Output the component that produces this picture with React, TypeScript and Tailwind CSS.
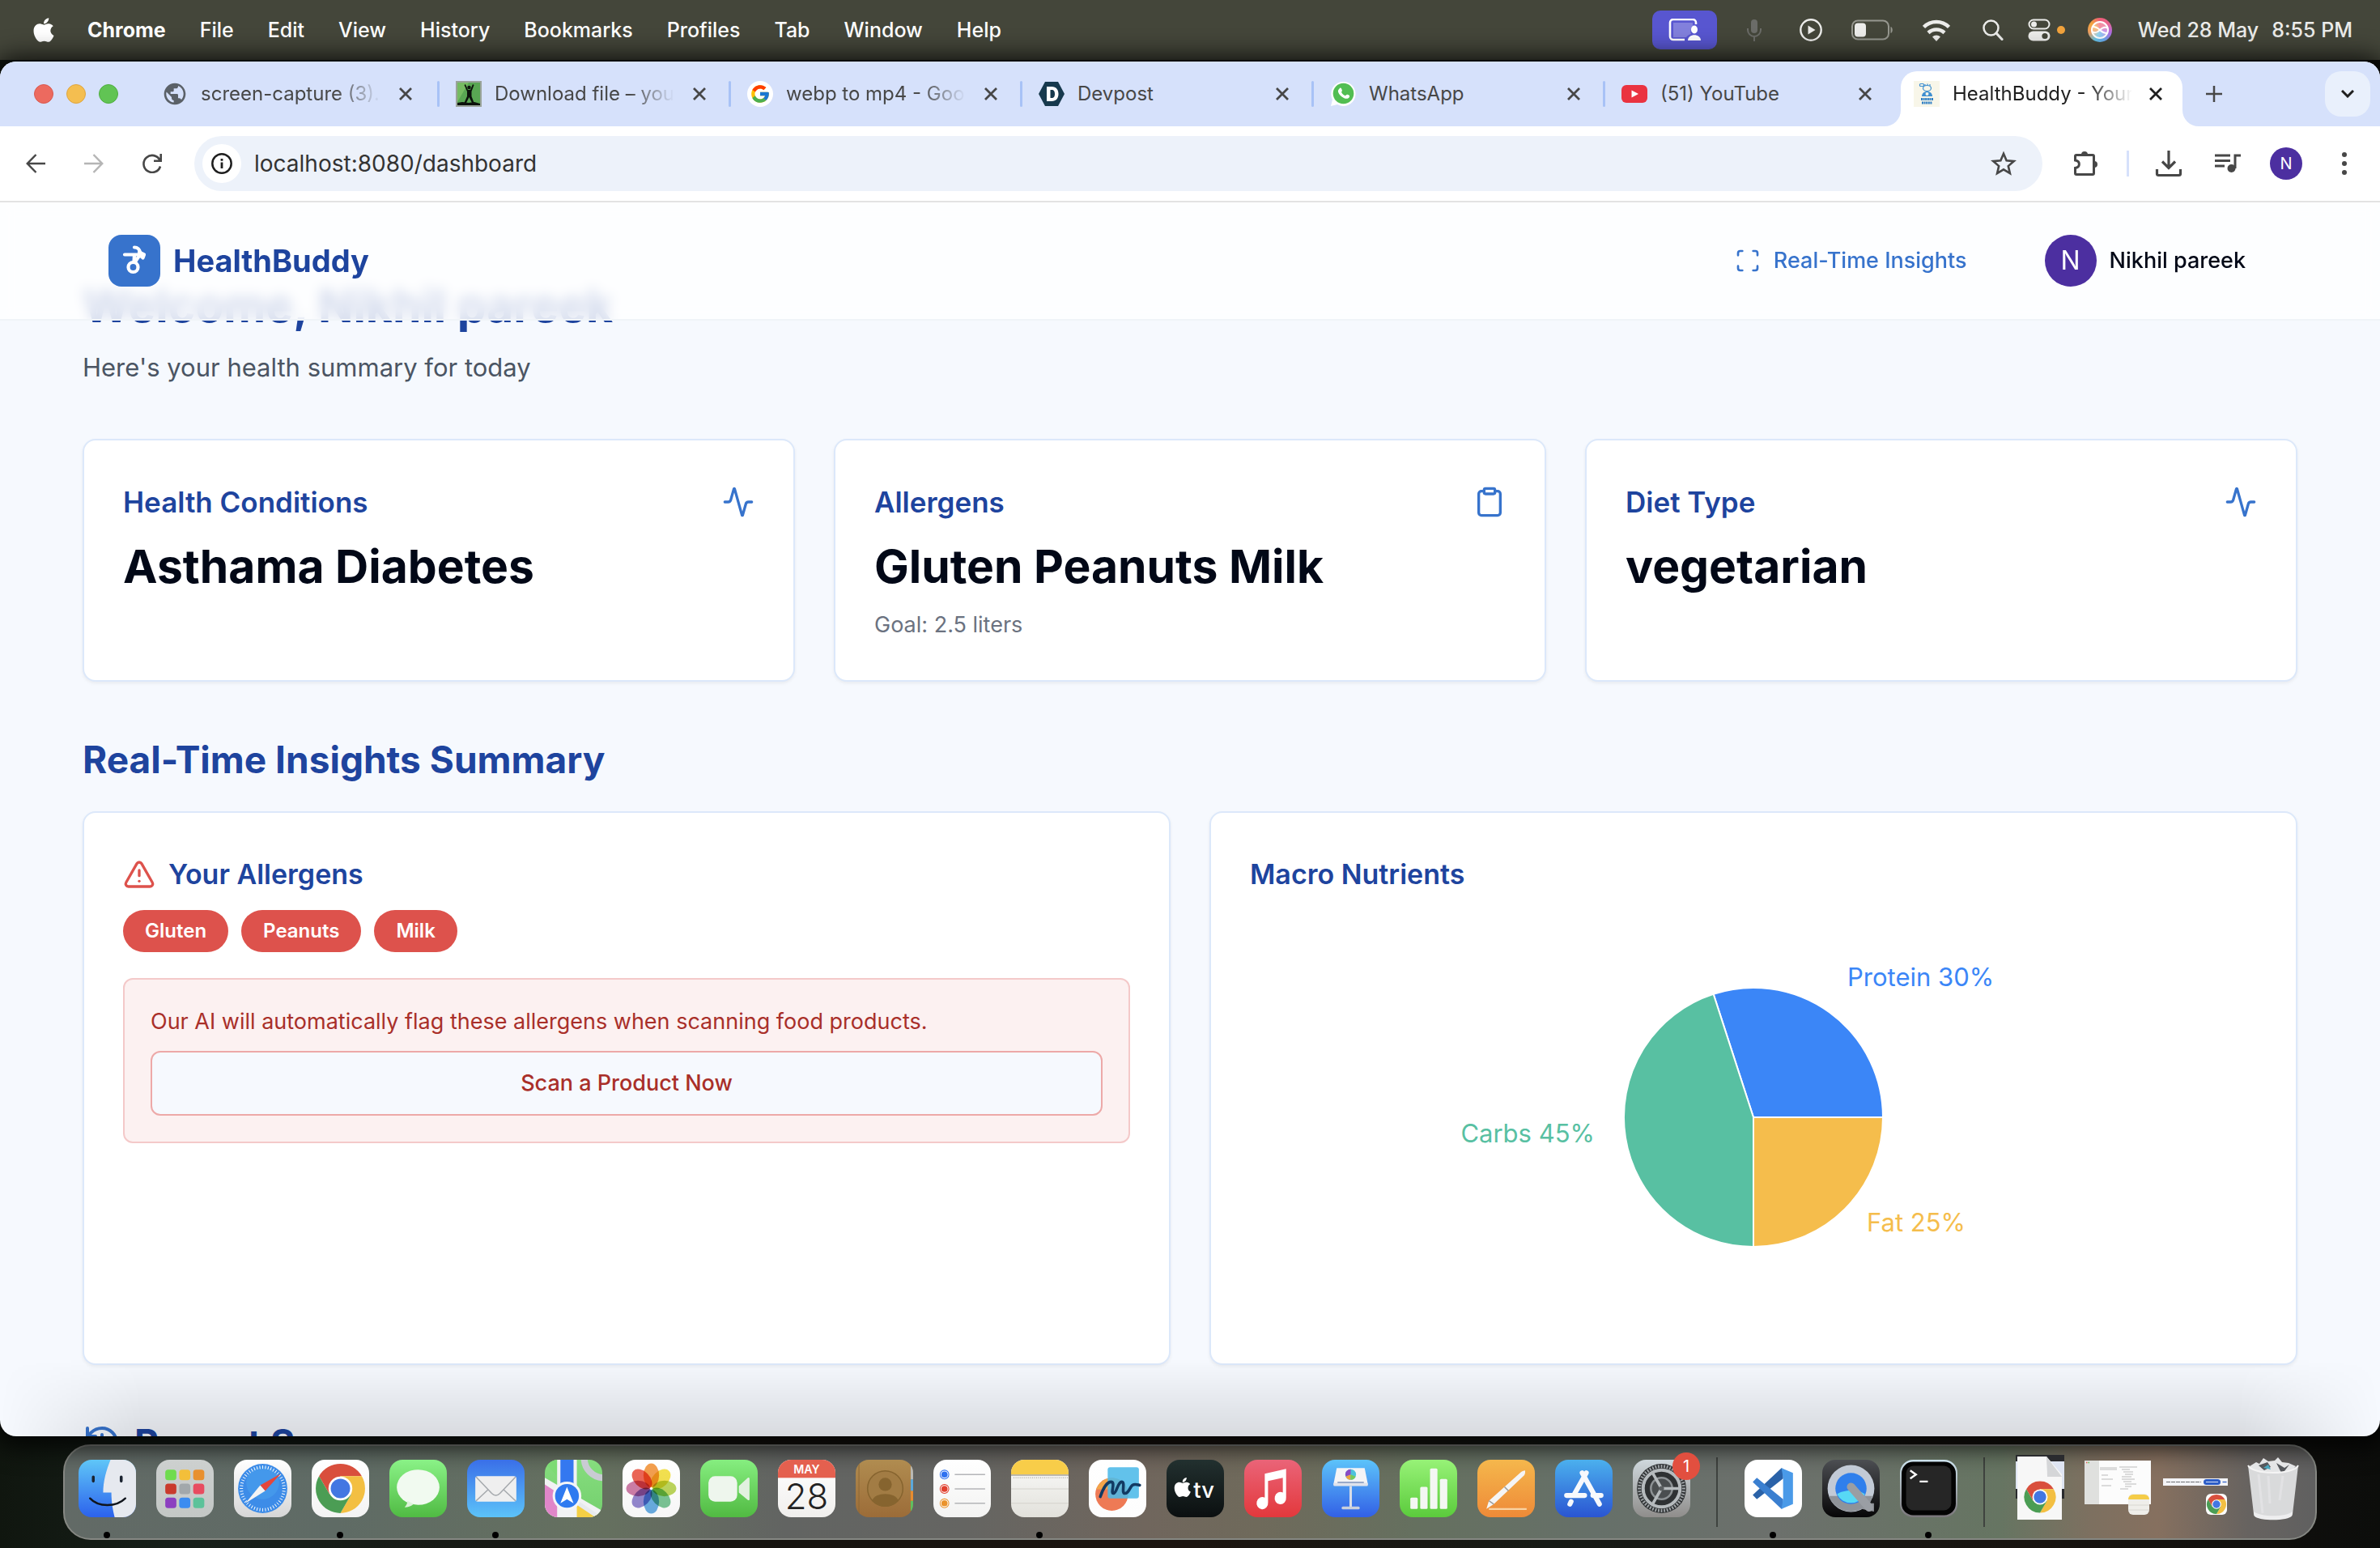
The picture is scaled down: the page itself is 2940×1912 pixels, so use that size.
import React from "react";
import { Activity, Clipboard, History, Scan, TriangleAlert } from "lucide-react";
import { FaApple } from "react-icons/fa";
import { FcGoogle } from "react-icons/fc";
import { MdPublic } from "react-icons/md";

/* ---------- Menu bar ---------- */

const menus = ["File", "Edit", "View", "History", "Bookmarks", "Profiles", "Tab", "Window", "Help"];

function MenuBar() {
  return (
    <header className="flex h-[74px] shrink-0 items-center bg-[#44463a] pr-[34px] pl-[38px] text-[25px] leading-8 font-medium text-white">
      <button aria-label="Apple menu" className="mr-[38px]">
        <FaApple className="h-[34px] w-8" />
      </button>
      <nav className="flex items-center gap-[42px]">
        <button className="font-bold">Chrome</button>
        {menus.map((m) => (
          <button key={m}>{m}</button>
        ))}
      </nav>
      <div className="ml-auto flex items-center text-[#ececea]">
        <button aria-label="Screen sharing" className="flex h-12 w-20 items-center justify-center rounded-[10px] bg-[#5856d0]">
          <svg viewBox="0 0 40 28" className="h-7 w-10" fill="none">
            <path d="M34 7V5a4 4 0 0 0-4-4H6a4 4 0 0 0-4 4v17a4 4 0 0 0 4 4h14" stroke="#fff" strokeWidth="2.6" />
            <path d="M6 5h24v6a6 6 0 0 0-2 8c-3 1-5 2-6 4H6z" fill="#fff" opacity=".25" />
            <ellipse cx="32" cy="13.500" rx="4" ry="5" fill="#fff" />
            <path d="M24 27c0-9 16-9 16 0z" fill="#fff" />
          </svg>
        </button>
        <svg viewBox="0 0 24 28" className="ml-[34px] h-7 w-6 text-[#6b6c68]" fill="none" stroke="currentColor" strokeWidth="2">
          <rect x="8" y="1" width="8" height="17" rx="4" fill="currentColor" stroke="none" />
          <path d="M4 12v2a8 8 0 0 0 16 0v-2M12 22v6" />
        </svg>
        <svg viewBox="0 0 28 28" className="ml-11 h-7 w-7" fill="none">
          <circle cx="14" cy="14" r="12.700" stroke="currentColor" strokeWidth="2.400" />
          <path d="M10.500 8.500v11l9-5.500z" fill="currentColor" />
        </svg>
        <svg viewBox="0 0 52 26" className="ml-9 h-[26px] w-[52px]" fill="none">
          <rect x="1" y="1.500" width="45" height="23" rx="7" stroke="#96978f" strokeWidth="2" />
          <rect x="4" y="4.500" width="14" height="17" rx="4" fill="currentColor" />
          <path d="M48.500 9c3 1 3 7 0 8z" fill="#96978f" />
        </svg>
        <svg viewBox="0 0 34 28" className="ml-9 h-7 w-[34px]" fill="none" stroke="currentColor" strokeWidth="4.500">
          <path d="M1.500 10.500a22 22 0 0 1 31 0M7 17.500a14.500 14.500 0 0 1 20 0" />
          <path d="M17 28l-5-5.500a7 7 0 0 1 10 0z" fill="currentColor" stroke="none" />
        </svg>
        <svg viewBox="0 0 26 26" className="ml-10 h-[26px] w-[26px]" fill="none" stroke="currentColor" strokeWidth="2.500">
          <circle cx="10.500" cy="10.500" r="9" />
          <path d="M17 17l7 7.500" strokeWidth="3.200" strokeLinecap="round" />
        </svg>
        <svg viewBox="0 0 28 28" className="ml-[30px] h-7 w-7" fill="none">
          <rect x="1.500" y="1.500" width="25" height="11" rx="5.500" stroke="currentColor" strokeWidth="2" />
          <circle cx="7.500" cy="7" r="3.500" fill="currentColor" />
          <rect x="0.500" y="15.500" width="27" height="12" rx="6" fill="currentColor" />
          <circle cx="21" cy="21.500" r="3.600" fill="#44463a" />
        </svg>
        <span className="ml-2 h-[10px] w-[10px] rounded-full bg-[#f2a33c]" />
        <span className="ml-7 flex h-[30px] w-[30px] items-center justify-center rounded-full bg-[conic-gradient(#ee5d78,#e9678f,#b36be0,#6aa8f0,#66c6e8,#f0a060,#f2a33c,#ee5d78)]">
          <svg viewBox="0 0 30 30" className="h-[30px] w-[30px]" fill="none" stroke="#fff" strokeWidth="2">
            <circle cx="15" cy="15" r="10" fill="#fff" fillOpacity=".3" />
            <path d="M5 17c5 3 8 0 10-2s6-5 10-2M6 11c5 0 7 2 9 4s5 4 9 4" />
          </svg>
        </span>
        <button className="ml-8 flex gap-4">
          <span>Wed 28 May</span>
          <span>8:55 PM</span>
        </button>
      </div>
    </header>
  );
}

/* ---------- Browser chrome ---------- */

function DownloadFavicon() {
  return (
    <svg viewBox="0 0 32 32" className="h-8 w-8">
      <rect width="32" height="32" fill="#9aa39a" />
      <rect x="2" y="2" width="28" height="28" fill="#59a653" />
      <path d="M2 2h14L2 26z" fill="#76bb62" />
      <path d="M12 4l3 7h3l3-7 1.500 1-3 8v6l3.500 9h-2.500l-4-8-4 8H10l4-9v-6l-3.500-8z" fill="#0c120c" />
      <path d="M2 27l6-1 8 1 7-1 7 2v2H2z" fill="#0c120c" />
      <circle cx="16.500" cy="8" r="2.200" fill="#0c120c" />
    </svg>
  );
}

function GoogleFavicon() {
  return (
    <span className="flex h-8 w-8 items-center justify-center rounded-full bg-white">
      <FcGoogle className="h-[26px] w-[26px]" />
    </span>
  );
}

function DevpostFavicon() {
  return (
    <svg viewBox="0 0 32 32" className="h-8 w-8">
      <path d="M8 1h16l8 15-8 15H8L0 16z" fill="#17394d" />
      <path fillRule="evenodd" d="M10 7h6c6 0 8.500 4 8.500 9s-2.500 9-8.500 9h-6zm4.500 4v10H16c3 0 4-2 4-5s-1-5-4-5z" fill="#fff" />
    </svg>
  );
}

function WhatsappFavicon() {
  return (
    <svg viewBox="0 0 32 32" className="h-8 w-8">
      <path d="M16 1a15 15 0 1 1-7 28l-8 2 2-8A15 15 0 0 1 16 1z" fill="#fff" />
      <circle cx="16.500" cy="15.500" r="12.800" fill="#52be52" />
      <path d="M12 9c1-1 2 0 2.500 1.500.8 2 .3 2-.5 3.200 1 2 2.500 3.500 5 4.600 1-.8 1.500-2 2.500-1.500 2 .8 3 1.200 2.500 2.700-.8 2.500-4 3-7 1.500-3.500-1.500-6-4.500-7-7.500-.4-2 .7-3.400 2-4.500z" fill="#fff" />
    </svg>
  );
}

function YoutubeFavicon() {
  return (
    <svg viewBox="0 0 32 32" className="h-8 w-8">
      <rect y="5" width="32" height="22" rx="6" fill="#ea3340" />
      <path d="M12.500 11.500v9L21 16z" fill="#fff" />
    </svg>
  );
}

function HealthFavicon() {
  return (
    <svg viewBox="0 0 32 32" className="h-8 w-8">
      <rect width="32" height="32" fill="#f8f6e9" />
      <g fill="none" stroke="#3f8fd0" strokeWidth="1.200">
        <rect x="7.500" y="3.500" width="5" height="3" rx="1" />
        <path d="M14 6V4M17 6V3.500M20 6V4" />
        <ellipse cx="16.500" cy="9" rx="5" ry="3.500" />
      </g>
      <path d="M10 19c0-8 13-8 13 0z" fill="#3f8fd0" />
      <circle cx="16.500" cy="16" r="2" fill="#f8f6e9" />
      <path d="M9 22.500h15M10 27h13" stroke="#2f7fc4" strokeWidth="3" strokeDasharray="2 .6" />
    </svg>
  );
}

function CloseIcon() {
  return (
    <svg viewBox="0 0 18 18" className="h-[18px] w-[18px]" fill="none" stroke="currentColor" strokeWidth="2.800">
      <path d="M2 2l14 14M16 2L2 16" />
    </svg>
  );
}

const tabs = [
  { title: "screen-capture (3).", icon: <MdPublic className="h-8 w-8 text-[#5b6168]" />, fade: true, sep: false },
  { title: "Download file – you", icon: <DownloadFavicon />, fade: true, sep: true },
  { title: "webp to mp4 - Goo", icon: <GoogleFavicon />, fade: true, sep: true },
  { title: "Devpost", icon: <DevpostFavicon />, fade: false, sep: true },
  { title: "WhatsApp", icon: <WhatsappFavicon />, fade: false, sep: true },
  { title: "(51) YouTube", icon: <YoutubeFavicon />, fade: false, sep: true },
];

const fadeMask = "[mask-image:linear-gradient(to_right,black_75%,transparent)]";

function TabStrip() {
  return (
    <div className="flex h-20 shrink-0 items-center bg-[#d6e1fb] text-2xl text-[#474747]">
      <div className="flex gap-4 pr-[34px] pl-[42px]">
        <button aria-label="Close window" className="h-6 w-6 rounded-full border border-[#d9584f] bg-[#ec6a5f]" />
        <button aria-label="Minimise window" className="h-6 w-6 rounded-full border border-[#dfa53f] bg-[#f4be50]" />
        <button aria-label="Zoom window" className="h-6 w-6 rounded-full border border-[#4fae3f] bg-[#61c454]" />
      </div>
      {tabs.map((t) => (
        <div key={t.title} className="flex w-[360px] shrink-0 items-center">
          {t.sep && <span className="h-8 w-[3px] rounded bg-[#a8c2f6]" />}
          <button className="ml-5 flex items-center gap-4">
            {t.icon}
            <span className={"w-[222px] overflow-hidden text-left whitespace-nowrap " + (t.fade ? fadeMask : "")}>{t.title}</span>
          </button>
          <button aria-label={"Close " + t.title} className="ml-[22px]">
            <CloseIcon />
          </button>
        </div>
      ))}
      <div className="-ml-3 flex h-20 shrink-0 items-end">
        <svg viewBox="0 0 20 20" className="h-5 w-5" fill="#fff">
          <path d="M20 0v20H0A20 20 0 0 0 20 0z" />
        </svg>
        <div className="flex h-[68px] items-center self-end rounded-t-[20px] bg-white pr-6 pb-3 pl-4 text-[#1f1f1f]">
          <button className="flex items-center gap-4">
            <HealthFavicon />
            <span className={"w-[222px] overflow-hidden text-left whitespace-nowrap " + fadeMask}>HealthBuddy - Your</span>
          </button>
          <button aria-label="Close HealthBuddy" className="ml-5">
            <CloseIcon />
          </button>
        </div>
        <svg viewBox="0 0 20 20" className="h-5 w-5" fill="#fff">
          <path d="M0 0v20h20A20 20 0 0 1 0 0z" />
        </svg>
      </div>
      <button aria-label="New tab" className="ml-2">
        <svg viewBox="0 0 22 22" className="h-[22px] w-[22px]" stroke="#474747" strokeWidth="2.500">
          <path d="M11 1v20M1 11h20" />
        </svg>
      </button>
      <button aria-label="Search tabs" className="mr-3 ml-auto flex h-14 w-14 items-center justify-center rounded-[20px] bg-[#e9f0fc]">
        <svg viewBox="0 0 16 10" className="h-[10px] w-4" fill="none" stroke="#1f1f1f" strokeWidth="3">
          <path d="M1 1l7 7 7-7" />
        </svg>
      </button>
    </div>
  );
}

function Toolbar() {
  return (
    <div className="flex h-[94px] shrink-0 items-center border-b-2 border-[#e3e3e3] bg-white pr-[38px] pl-8 text-[#474747]">
      <button aria-label="Back">
        <svg viewBox="0 0 24 24" className="h-6 w-6" fill="none" stroke="currentColor" strokeWidth="2.500">
          <path d="M24 12H2M12.500 1L1.800 12l10.700 11" />
        </svg>
      </button>
      <button aria-label="Forward" className="ml-12 text-[#b5b5b5]">
        <svg viewBox="0 0 24 24" className="h-6 w-6" fill="none" stroke="currentColor" strokeWidth="2.500">
          <path d="M0 12h22M11.500 1l10.700 11-10.700 11" />
        </svg>
      </button>
      <button aria-label="Reload" className="ml-12">
        <svg viewBox="0 0 24 24" className="h-6 w-6" fill="none" stroke="currentColor" strokeWidth="2.600">
          <path d="M22 15.500A10.500 10.500 0 1 1 21.500 8M22.700 0v8.700H14" />
        </svg>
      </button>
      <div className="ml-10 flex h-[68px] grow items-center rounded-full bg-[#edf2fa] pr-8 pl-[10px]">
        <button aria-label="Site information" className="flex h-12 w-12 items-center justify-center rounded-full bg-white">
          <svg viewBox="0 0 26 26" className="h-[26px] w-[26px]" fill="none" stroke="#1f1f1f">
            <circle cx="13" cy="13" r="11.700" strokeWidth="2.500" />
            <path d="M13 11.500v7.500M13 7v2.800" strokeWidth="2.800" />
          </svg>
        </button>
        <input
          aria-label="Address"
          defaultValue="localhost:8080/dashboard"
          className="ml-4 min-w-0 grow bg-transparent text-[28px] leading-9 text-[#333333] outline-none"
        />
        <button aria-label="Bookmark this tab">
          <svg viewBox="0 0 32 32" className="h-8 w-8" fill="none" stroke="currentColor" strokeWidth="2.600">
            <path d="M16 3.800l3.600 8.500 9.200.8-7 6 2.100 9L16 23.300l-7.900 4.800 2.100-9-7-6 9.200-.8z" />
          </svg>
        </button>
      </div>
      <button aria-label="Extensions" className="ml-9">
        <svg viewBox="0 0 34 34" className="h-[34px] w-[34px]" fill="none" stroke="currentColor" strokeWidth="3">
          <path d="M6 6.500h20a1.500 1.500 0 0 1 1.500 1.500v21a1.500 1.500 0 0 1-1.500 1.500H6A1.500 1.500 0 0 1 4.500 29v-6.500c6.500-1 6.500-8.500 0-9.500V8A1.500 1.500 0 0 1 6 6.500z" />
          <path d="M12 6a4 4 0 0 1 8 0zM28 14a4 4 0 0 1 0 8z" fill="currentColor" stroke="none" />
        </svg>
      </button>
      <span className="ml-[34px] h-8 w-[3px] bg-[#d6e1fb]" />
      <button aria-label="Downloads" className="ml-8">
        <svg viewBox="0 0 34 34" className="h-[34px] w-[34px]" fill="none" stroke="currentColor" strokeWidth="3.200">
          <path d="M17 1v21M9 14.500l8 8 8-8M2.500 24v5.500a2 2 0 0 0 2 2h25a2 2 0 0 0 2-2V24" />
        </svg>
      </button>
      <button aria-label="Media controls" className="ml-10">
        <svg viewBox="0 0 32 26" className="h-[26px] w-8" fill="none" stroke="currentColor" strokeWidth="3">
          <path d="M0 3h19M0 9.500h19M0 16h12M25 19V3h7" />
          <circle cx="20.500" cy="19" r="5" fill="currentColor" stroke="none" />
        </svg>
      </button>
      <button aria-label="Profile" className="ml-9 flex h-10 w-10 items-center justify-center rounded-full bg-[#4c2fa0] text-xl text-white">
        N
      </button>
      <button aria-label="Chrome menu" className="ml-[46px]">
        <svg viewBox="0 0 12 30" className="h-[30px] w-3" fill="currentColor">
          <circle cx="6" cy="4" r="3" />
          <circle cx="6" cy="15" r="3" />
          <circle cx="6" cy="26" r="3" />
        </svg>
      </button>
    </div>
  );
}

/* ---------- Dashboard page ---------- */

function SiteHeader() {
  return (
    <header className="relative z-10 border-b-2 border-[#f0f4f8] bg-white/80 backdrop-blur-sm">
      <div className="mx-auto flex h-36 max-w-[2800px] items-center px-16">
        <a href="#home" className="flex items-center gap-4">
          <span className="flex h-16 w-16 items-center justify-center rounded-2xl bg-[#3773cc]">
            <svg viewBox="0 0 64 64" className="h-16 w-16" fill="none" stroke="#fff" strokeWidth="4.200" strokeLinecap="round" strokeLinejoin="round">
              <circle cx="30.500" cy="40" r="6" />
              <path d="M20 24.500h17M32 15.500c4 0 6.500 2.500 7.500 7" />
              <path d="M38 21.500l6 3-1.500 4-4-3.500zM38 26c-1.500 2.500-3 3.500-4.500 7M32 25l-.5 8" />
            </svg>
          </span>
          <span className="text-[38px] leading-[56px] font-bold text-[#1e449e]">HealthBuddy</span>
        </a>
        <nav className="ml-auto flex items-center gap-8 text-[27px] leading-10 font-medium">
          <a href="#insights" className="flex items-center gap-4 px-8 text-[#3773cc]">
            <Scan className="h-8 w-8" />
            Real-Time Insights
          </a>
          <button className="flex items-center gap-4 px-8 text-[#020817]">
            <span className="flex h-16 w-16 items-center justify-center rounded-full bg-[#4c2fa0] text-[32px] font-normal text-white">N</span>
            Nikhil pareek
          </button>
        </nav>
      </div>
    </header>
  );
}

const cardClass = "rounded-2xl border-2 border-[#dce8fa] bg-white p-12 shadow-[0_2px_4px_rgba(0,0,0,0.06)]";

const summary = [
  { title: "Health Conditions", value: "Asthama Diabetes", note: "", Icon: Activity },
  { title: "Allergens", value: "Gluten Peanuts Milk", note: "Goal: 2.5 liters", Icon: Clipboard },
  { title: "Diet Type", value: "vegetarian", note: "", Icon: Activity },
];

function PieChart() {
  return (
    <svg viewBox="0 0 1244 512" className="h-[512px] w-full font-['Inter',sans-serif] text-[31px]" role="img" aria-label="Macro nutrients">
      <g transform="translate(622 256)" stroke="#fff" strokeWidth="2">
        <path d="M0 0H160A160 160 0 0 0 -49.400 -152.200Z" fill="#3b86f7" />
        <path d="M0 0L-49.400 -152.200A160 160 0 0 0 0 160Z" fill="#58c0a2" />
        <path d="M0 0V160A160 160 0 0 0 160 0Z" fill="#f5bd4c" />
      </g>
      <text x="738" y="94" fill="#3b86f7">Protein 30%</text>
      <text x="426" y="287" textAnchor="end" fill="#58c0a2">Carbs 45%</text>
      <text x="762" y="397" fill="#f5bd4c">Fat 25%</text>
    </svg>
  );
}

function Dashboard() {
  return (
    <main className="mx-auto -mt-[54px] max-w-[2800px] px-8">
      <h1 className="text-[57px] leading-[72px] font-bold text-[#1e449e]">Welcome, Nikhil pareek</h1>
      <p className="mt-4 text-[31px] leading-[48px] text-[#4b5563]">Here's your health summary for today</p>

      <section className="mt-16 grid grid-cols-3 gap-12">
        {summary.map(({ title, value, note, Icon }) => (
          <article key={title} className={cardClass}>
            <div className="flex items-center justify-between">
              <h2 className="text-[35px] leading-[56px] font-semibold text-[#1e449e]">{title}</h2>
              <Icon className="h-10 w-10 text-[#3773cc]" />
            </div>
            <p className="mt-4 text-[57px] leading-[72px] font-bold text-[#020817]">{value}</p>
            {note && <p className="mt-4 text-[27px] leading-10 text-[#6b7280]">{note}</p>}
          </article>
        ))}
      </section>

      <h2 className="mt-16 text-[46px] leading-[64px] font-bold text-[#1e449e]">Real-Time Insights Summary</h2>
      <section className="mt-8 grid grid-cols-2 gap-12">
        <article className={cardClass}>
          <h3 className="flex items-center gap-4 text-[34px] leading-[56px] font-semibold text-[#1e449e]">
            <TriangleAlert className="h-10 w-10 text-[#dd524c]" />
            Your Allergens
          </h3>
          <ul className="mt-4 flex gap-4">
            {["Gluten", "Peanuts", "Milk"].map((a) => (
              <li key={a} className="rounded-full bg-[#dd524c] px-[27px] py-[10px] text-2xl leading-8 font-semibold text-white">
                {a}
              </li>
            ))}
          </ul>
          <div className="mt-8 rounded-xl border-2 border-[#f4c9c9] bg-[#fcf1f1] p-8">
            <p className="text-[27px] leading-10 text-[#a92f29]">Our AI will automatically flag these allergens when scanning food products.</p>
            <button className="mt-4 h-20 w-full rounded-xl border-2 border-[#eda9a8] bg-[#f6f9fe] text-[27px] font-medium text-[#a92f29]">
              Scan a Product Now
            </button>
          </div>
        </article>
        <article className={cardClass}>
          <h3 className="text-[34px] leading-[56px] font-semibold text-[#1e449e]">Macro Nutrients</h3>
          <div className="mt-4">
            <PieChart />
          </div>
        </article>
      </section>

      <h2 className="mt-16 flex items-center gap-4 text-[46px] leading-[64px] font-bold text-[#1e449e]">
        <History className="h-12 w-12 text-[#3773cc]" />
        Recent Scans
      </h2>
    </main>
  );
}

/* ---------- Dock ---------- */

function Tile({ id, from, to, children }: { id: string; from: string; to: string; children?: React.ReactNode }) {
  return (
    <svg viewBox="0 0 70 70" className="h-[71px] w-[71px]">
      <defs>
        <linearGradient id={id} x1="0" y1="0" x2="0" y2="1">
          <stop offset="0" stopColor={from} />
          <stop offset="1" stopColor={to} />
        </linearGradient>
        <clipPath id={id + "-clip"}>
          <rect width="70" height="70" rx="16" />
        </clipPath>
      </defs>
      <g clipPath={"url(#" + id + "-clip)"}>
        <rect width="70" height="70" fill={"url(#" + id + ")"} />
        {children}
      </g>
    </svg>
  );
}

function ChromeMark() {
  return (
    <>
      <path d="M0 0L0 -15H26A30 30 0 0 0 -26 -15L-13 7.500Z" fill="#d94f3d" />
      <path d="M0 0L13 7.500L0 30A30 30 0 0 0 26 -15H0Z" fill="#f3bf42" />
      <path d="M0 0L-13 7.500L-26 -15A30 30 0 0 0 0 30L13 7.500Z" fill="#4b9d54" />
      <circle r="14.500" fill="#fff" />
      <circle r="11.800" fill="#4377e2" />
    </>
  );
}

const petals = [
  { a: 0, c: "#f2953a" },
  { a: 45, c: "#f2de3c" },
  { a: 90, c: "#b6d24a" },
  { a: 135, c: "#6cc08b" },
  { a: 180, c: "#5aa5e0" },
  { a: 225, c: "#8a7ccb" },
  { a: 270, c: "#c9709f" },
  { a: 315, c: "#ea5545" },
];

const launchColors = ["#6fdc4e", "#f3bf3a", "#e8902f", "#c93a2c", "#a2a8ab", "#e84c60", "#8c3fc0", "#3b8cf0", "#5cc29a"];
const ticks = Array.from({ length: 48 }, (_, i) => i * 7.5);

const apps: { name: string; running?: boolean; badge?: string; art: React.ReactNode }[] = [
  {
    name: "Finder",
    running: true,
    art: (
      <Tile id="finder" from="#5fc6f8" to="#2c62ec">
        <path d="M39 0C34 12 30 26 30 40h10c0 12 2 22 4 30h26V0z" fill="#e6e9ef" />
        <path d="M18 21v5M52 21v5" stroke="#1a2330" strokeWidth="3.500" strokeLinecap="round" />
        <path d="M14 47c10 11 32 11 43 0" fill="none" stroke="#10151d" strokeWidth="2.400" strokeLinecap="round" />
      </Tile>
    ),
  },
  {
    name: "Launchpad",
    art: (
      <Tile id="launchpad" from="#cdd0cf" to="#c3c7c5">
        {launchColors.map((c, i) => (
          <rect key={c} x={11 + (i % 3) * 17} y={12 + Math.floor(i / 3) * 17} width="13.500" height="13" rx="3.500" fill={c} />
        ))}
      </Tile>
    ),
  },
  {
    name: "Safari",
    art: (
      <Tile id="safari" from="#ffffff" to="#d6d6d6">
        <circle cx="35" cy="35" r="30" fill="#3d8ce8" />
        <circle cx="35" cy="28" r="20" fill="#4ba4ee" opacity=".5" />
        {ticks.map((t) => (
          <path key={t} d="M35 7v4" stroke="#fff" strokeWidth=".9" transform={"rotate(" + t + " 35 35)"} />
        ))}
        <path d="M57 17L32 31l6 7z" fill="#e5463c" />
        <path d="M14 53l18-22 6 7z" fill="#f4f4f4" />
      </Tile>
    ),
  },
  {
    name: "Google Chrome",
    running: true,
    art: (
      <Tile id="chrome" from="#ffffff" to="#f3f3f3">
        <g transform="translate(35 35)">
          <ChromeMark />
        </g>
      </Tile>
    ),
  },
  {
    name: "Messages",
    art: (
      <Tile id="messages" from="#8af287" to="#50bb43">
        <ellipse cx="35" cy="33.500" rx="26" ry="21.500" fill="#f1faf0" />
        <path d="M22 50c0 3-1 5-3.500 8 5 0 9-2 11-4z" fill="#dcf3d9" />
      </Tile>
    ),
  },
  {
    name: "Mail",
    running: true,
    art: (
      <Tile id="mail" from="#3a6fe8" to="#5cc3f9">
        <rect x="10" y="20" width="50" height="31" rx="3" fill="#efefef" />
        <path d="M11 21l19 20c3 3 7 3 10 0l19-20M11 50l15-14M59 50L44 36" fill="none" stroke="#a5a9ad" strokeWidth="1.500" />
      </Tile>
    ),
  },
  {
    name: "Maps",
    art: (
      <Tile id="maps" from="#86dd7e" to="#74d06e">
        <path d="M0 22L70 62v8H0z" fill="#f1f2f4" />
        <path d="M0 30l18 12v28H0z" fill="#e086c9" />
        <path d="M36 50l34 20H36z" fill="#f4cf45" />
        <path d="M36 50l30 20" stroke="#e7eaee" strokeWidth="5" />
        <path d="M0 4l16 17V0H0z" fill="#7ddb74" />
        <rect x="15" width="24" height="70" fill="#f1f2f4" />
        <rect x="19" width="16" height="34" fill="#3478f0" />
        <circle cx="72" cy="-2" r="24" fill="none" stroke="#c9cbd3" strokeWidth="8" />
        <circle cx="27" cy="44" r="17.500" fill="#f4f5f7" />
        <circle cx="27" cy="44" r="14.500" fill="#2f7af0" />
        <path d="M27 33l8 20-8-5-8 5z" fill="#fff" />
      </Tile>
    ),
  },
  {
    name: "Photos",
    art: (
      <Tile id="photos" from="#ffffff" to="#f6f6f6">
        {petals.map((p) => (
          <ellipse key={p.a} cx="35" cy="19" rx="9.500" ry="14.500" fill={p.c} opacity=".9" className="mix-blend-multiply" transform={"rotate(" + p.a + " 35 35)"} />
        ))}
      </Tile>
    ),
  },
  {
    name: "FaceTime",
    art: (
      <Tile id="facetime" from="#86ee80" to="#51ba42">
        <rect x="10" y="20" width="35" height="31" rx="8" fill="#eef6ed" />
        <path d="M47 32l11-10c1-1 2 0 2 1v25c0 1-1 2-2 1L47 40z" fill="#e2f1e0" />
      </Tile>
    ),
  },
  {
    name: "Calendar",
    art: (
      <Tile id="calendar" from="#ffffff" to="#f0efed">
        <rect width="70" height="22" fill="#e4604f" />
        <text x="35" y="17" textAnchor="middle" fontSize="14" fontWeight="600" fill="#fff">MAY</text>
        <text x="35" y="60" textAnchor="middle" fontSize="43" fontWeight="300" fill="#222">28</text>
      </Tile>
    ),
  },
  {
    name: "Contacts",
    art: (
      <Tile id="contacts" from="#b08c50" to="#9c6c38">
        <path d="M67 8h3v16h-3z" fill="#b9b9b5" />
        <path d="M67 24h3v14h-3z" fill="#5ba8dc" />
        <path d="M67 38h3v12h-3z" fill="#e88c30" />
        <path d="M67 50h3v12h-3z" fill="#5fc060" />
        <path d="M4 0v70" stroke="#8d6836" strokeWidth="1" />
        <circle cx="36" cy="35" r="21.500" fill="#a27c44" stroke="#86642f" strokeWidth="1.500" />
        <circle cx="36" cy="30" r="8" fill="#86642f" />
        <path d="M20 50c3-11 29-11 32 0-8 9-24 9-32 0z" fill="#86642f" />
      </Tile>
    ),
  },
  {
    name: "Reminders",
    art: (
      <Tile id="reminders" from="#ffffff" to="#f3f3f2">
        {[{ y: 18, c: "#2f72f0" }, { y: 35.5, c: "#e0402f" }, { y: 53, c: "#ea932c" }].map((r) => (
          <g key={r.y}>
            <circle cx="13.500" cy={r.y} r="5.300" fill="#fff" stroke={r.c} strokeWidth="1" />
            <circle cx="13.500" cy={r.y} r="3.800" fill={r.c} />
            <path d={"M26 " + r.y + "h37"} stroke="#b4b5b8" strokeWidth="1.300" />
          </g>
        ))}
      </Tile>
    ),
  },
  {
    name: "Notes",
    running: true,
    art: (
      <Tile id="notes" from="#fbfbfa" to="#e2e1db">
        <rect width="70" height="18" fill="#f8cd49" />
        <path d="M0 18.700h70" stroke="#a8a49a" strokeWidth="1.400" />
        <path d="M3 22h66" stroke="#b9b6ae" strokeWidth="1.500" strokeDasharray="1 1.500" />
        <path d="M0 35.500h70M0 53h70" stroke="#d3d1cb" strokeWidth="1.200" />
      </Tile>
    ),
  },
  {
    name: "Freeform",
    art: (
      <Tile id="freeform" from="#ffffff" to="#fdfdfd">
        <circle cx="28" cy="42" r="20" fill="#ee7a55" />
        <path d="M9 36a20 20 0 0 1 38 0z" fill="#f2a54a" />
        <rect x="23" y="9" width="38" height="38" rx="3" fill="#4cb9e8" opacity=".88" />
        <path d="M14 45c3-9 8-18 13-18 6 0-1 14 3 14s5-14 10-14-1 14 4 14c5 0 6-8 9-10s5-1 9 0" fill="none" stroke="#123a63" strokeWidth="3.500" strokeLinecap="round" />
      </Tile>
    ),
  },
  {
    name: "TV",
    art: (
      <Tile id="tv" from="#22302f" to="#0b0f10">
        <FaApple x="6" y="20" size={27} color="#fff" />
        <text x="45.500" y="46" textAnchor="middle" fontSize="27" fontWeight="500" fill="#fff">tv</text>
      </Tile>
    ),
  },
  {
    name: "Music",
    art: (
      <Tile id="music" from="#ea6478" to="#e3383c">
        <path d="M25 17l26-6v35a7 7.500 0 1 1-4-6V22l-18 4v26a7 7.500 0 1 1-4-6z" fill="#fff" />
      </Tile>
    ),
  },
  {
    name: "Keynote",
    art: (
      <Tile id="keynote" from="#5cc3fa" to="#3260e6">
        <path d="M18 10h34l4 20H14z" fill="#f4f4f6" />
        <rect x="14" y="28" width="42" height="4" rx="1.500" fill="#dfe3ec" />
        <path d="M19 27.500h32" stroke="#7c93bb" strokeWidth="1.500" />
        <circle cx="35" cy="18" r="6.500" fill="#4cc2dc" />
        <path d="M35 18V11.500a6.500 6.500 0 0 0-6 9z" fill="#8a4bc4" />
        <path d="M35 18l-6 2.500a6.500 6.500 0 0 0 6 4z" fill="#eda43c" />
        <path d="M35 18v6.500a6.500 6.500 0 0 0 6-4z" fill="#77c95a" />
        <path d="M35 32v26" stroke="#d9dde6" strokeWidth="3" />
        <rect x="24" y="57" width="22" height="3.500" rx="1.500" fill="#c9cfdb" />
      </Tile>
    ),
  },
  {
    name: "Numbers",
    art: (
      <Tile id="numbers" from="#97f277" to="#5bcb3c">
        <rect x="13" y="46" width="9" height="14" rx="1.500" fill="#f4f7f3" />
        <rect x="25" y="33" width="9" height="27" rx="1.500" fill="#f4f7f3" />
        <rect x="37" y="10.500" width="9" height="49.500" rx="1.500" fill="#f4f7f3" />
        <rect x="49" y="23.500" width="9" height="36.500" rx="1.500" fill="#f4f7f3" />
      </Tile>
    ),
  },
  {
    name: "Pages",
    art: (
      <Tile id="pages" from="#f5b74c" to="#ee8a38">
        <path d="M14 60h46" stroke="#f9d3a2" strokeWidth="2.200" />
        <path d="M11 60l3-10L52 16c3-3 6-3 6-3s1 3-1 6L20 54z" fill="#f5f5f5" />
        <path d="M14 50l6 4M33 33l5 5" stroke="#9b9b9b" strokeWidth="1.500" />
      </Tile>
    ),
  },
  {
    name: "App Store",
    art: (
      <Tile id="appstore" from="#4bb0ee" to="#2a55d2">
        <g stroke="#f7f9fc" strokeWidth="6" strokeLinecap="round">
          <path d="M38 16L24 41M33 16l21 38M14 43.500h22M46 43.500h10M19.500 51l-1.500 3" />
        </g>
      </Tile>
    ),
  },
  {
    name: "System Settings",
    badge: "1",
    art: (
      <Tile id="settings" from="#cfd8dd" to="#8f8d8b">
        <circle cx="35" cy="35" r="30" fill="#2e3133" />
        {ticks.map((t) => (
          <path key={t} d="M35 6v4" stroke="#9fa4a7" strokeWidth="1.800" transform={"rotate(" + t + " 35 35)"} />
        ))}
        <circle cx="35" cy="35" r="22.500" fill="none" stroke="#b5babd" strokeWidth="4" />
        <circle cx="35" cy="35" r="13" fill="#4a4e50" stroke="#8c9194" strokeWidth="2.500" />
        <path d="M35 35h22M35 35L24 16M35 35L24 54" stroke="#b5babd" strokeWidth="3.500" />
        <circle cx="35" cy="35" r="3" fill="#5b5f61" />
      </Tile>
    ),
  },
];

const tools: { name: string; running?: boolean; art: React.ReactNode }[] = [
  {
    name: "Visual Studio Code",
    running: true,
    art: (
      <Tile id="vscode" from="#ffffff" to="#ffffff">
        <path d="M10 43l5 5 32-25V11l-2-1z" fill="#2a62a8" />
        <path d="M10 27l5-5 32 26v11l-2 1z" fill="#3a7fd0" />
        <path d="M45 10l14 6v38l-14 6 2-12V22z" fill="#4a9ae8" />
      </Tile>
    ),
  },
  {
    name: "QuickTime Player",
    art: (
      <Tile id="quicktime" from="#4c4e52" to="#060607">
        <circle cx="35" cy="35" r="28.500" fill="#c2cad6" />
        <path d="M8 44a28.500 28.500 0 0 0 40 16l15 3V53h-5a28 28 0 0 0 3-9z" fill="#8f9399" />
        <circle cx="35" cy="35" r="19" fill="#2f7fec" />
        <path d="M18 42a19 19 0 0 0 34 0c-8-6-26-6-34 0z" fill="#57d9f5" />
        <path d="M35 33l22 25" stroke="#9a9ea4" strokeWidth="10" strokeLinecap="round" />
      </Tile>
    ),
  },
  {
    name: "Terminal",
    running: true,
    art: (
      <Tile id="terminal" from="#cde3ee" to="#7a767a">
        <rect x="2" y="2.500" width="66" height="65" rx="14" fill="#030303" />
        <rect x="7.500" y="7.500" width="55" height="54" rx="9" fill="#262626" />
        <path d="M12.500 13l7 5-7 5M24 26.500h10" fill="none" stroke="#fff" strokeWidth="2.400" />
      </Tile>
    ),
  },
];

const files: { name: string; art: React.ReactNode }[] = [
  {
    name: "Downloads",
    art: (
      <svg viewBox="0 0 60 82" className="h-[82px] w-[60px]">
        <rect width="60" height="54" fill="#2a2b2e" />
        <rect y="8" width="60" height="34" fill="#dfe5f3" />
        <path d="M2 2h36l19 22v56H2z" fill="#f7f7f7" />
        <path d="M38 2c0 8 1 16 1 25h18z" fill="#d5d6d8" />
        <g transform="translate(30 52) scale(.65)">
          <ChromeMark />
        </g>
      </svg>
    ),
  },
  {
    name: "Notes window",
    art: (
      <svg viewBox="0 0 82 68" className="h-[68px] w-[82px]">
        <rect width="82" height="54" fill="#fcfcfc" />
        <rect width="18" height="54" fill="#dfe0de" />
        <path d="M2 2.500h1.500" stroke="#e5604f" strokeWidth="1.500" />
        <path d="M4.500 2.500H6" stroke="#61c454" strokeWidth="1.500" />
        <rect x="19" y="8" width="21" height="4" fill="#dcdcdc" />
        <path d="M43 8h22M46 11h10M48 14h12M50 17h10M46 20h12M46 23h16M48 26h10M50 29h14M50 32h8M44 35h10M21 18h8M21 23h14M21 31h12" stroke="#a9a9a9" strokeWidth=".8" />
        <g transform="translate(54 41)">
          <rect width="26" height="26" rx="6" fill="#efeeea" />
          <path d="M0 7a6 6 0 0 1 6-6h14a6 6 0 0 1 6 6z" fill="#f5cc48" />
          <path d="M0 14h26M0 20h26" stroke="#d3d1cb" strokeWidth=".8" />
        </g>
      </svg>
    ),
  },
  {
    name: "Screen sharing bar",
    art: (
      <svg viewBox="0 0 82 68" className="h-[68px] w-[82px]">
        <rect x="1" y="22" width="80" height="9" fill="#f3f3f6" />
        <path d="M5 26.500h43" stroke="#6d6f74" strokeWidth="1.200" strokeDasharray="5 1" />
        <rect x="51" y="23" width="21" height="7" rx="3.500" fill="#2c5cc6" />
        <path d="M54 26.500h15" stroke="#d5e0f8" strokeWidth="1" />
        <path d="M74.500 26.500h5" stroke="#2c5cc6" strokeWidth="1.200" />
        <rect x="54" y="41" width="26" height="26" rx="6" fill="#fbfbfb" />
        <g transform="translate(67 54) scale(.4)">
          <ChromeMark />
        </g>
      </svg>
    ),
  },
  {
    name: "Trash",
    art: (
      <svg viewBox="0 0 64 82" className="h-[82px] w-16">
        <path d="M3 14l8-5 4 2 5-7 6 4 8-1 4-4 5 6 8 1 9 4-8 10H9z" fill="#e4e5e6" />
        <path d="M14 13l7 6 8-4-4-6zM36 10l10 6 6-4-9 12z" fill="#55585c" />
        <path d="M20 16l6-4 3 6z" fill="#48a8c0" />
        <path d="M1 13c6 12 56 12 62 0l-7 60c-1 9-47 9-48 0z" fill="#d9dadb" />
        <path d="M1 13c6 12 56 12 62 0" fill="none" stroke="#f4f4f4" strokeWidth="2" />
        <path d="M14 24l5 48M26 26l2 34M44 26l-4 30" stroke="#e2e2e4" strokeWidth="3" />
        <path d="M8 70c8 7 40 7 48 0l-.6 5c-4 7-43 7-47 0z" fill="#eeeeef" />
      </svg>
    ),
  },
];

function DockItem({ name, running, badge, art }: { name: string; running?: boolean; badge?: string; art: React.ReactNode }) {
  return (
    <button aria-label={name} className="relative flex h-full w-24 items-center justify-center pb-[10px]">
      {art}
      {badge && (
        <span className="absolute top-2 right-0 flex h-[34px] w-[34px] items-center justify-center rounded-full bg-[#e24f3f] text-xl text-white">
          {badge}
        </span>
      )}
      {running && <span className="absolute bottom-0 left-11 h-2 w-2 rounded-full bg-black" />}
    </button>
  );
}

function DockSeparator() {
  return (
    <span className="flex w-[42px] justify-center">
      <span className="h-[86px] w-[2px] bg-[#3f433f]" />
    </span>
  );
}

function Dock() {
  return (
    <nav
      aria-label="Dock"
      className="mx-auto mt-[10px] mb-[10px] flex h-[118px] w-fit shrink-0 items-center rounded-[34px] border-2 border-[#868883] bg-[linear-gradient(90deg,#626a66_0%,#5f6b65_12%,#65705f_24%,#626462_32%,#656562_40%,#70665d_48%,#6f6a5b_53%,#65705f_60%,#667069_68%,#6c706c_76%,#667562_86%,#7d7060_90%,#86705f_93%,#676360_97%,#606060_100%)] px-1"
    >
      {apps.map((a) => (
        <DockItem key={a.name} {...a} />
      ))}
      <DockSeparator />
      {tools.map((a) => (
        <DockItem key={a.name} {...a} />
      ))}
      <DockSeparator />
      {files.map((a) => (
        <DockItem key={a.name} {...a} />
      ))}
    </nav>
  );
}

export default function App() {
  return (
    <div className="flex h-screen flex-col overflow-hidden bg-[linear-gradient(90deg,#10160f_0%,#17201a_8%,#161410_30%,#1c1510_50%,#161a15_65%,#181410_85%,#0c0d0b_100%)] font-['Inter',sans-serif]">
      <MenuBar />
      <div className="relative mt-[2px] flex min-h-0 flex-1 flex-col overflow-hidden rounded-[20px] bg-[#f6f9fe] shadow-[0_4px_30px_10px_rgba(0,0,0,0.8)]">
        <TabStrip />
        <Toolbar />
        <div className="min-h-0 flex-1 overflow-hidden">
          <SiteHeader />
          <Dashboard />
        </div>
        <div className="pointer-events-none absolute inset-x-0 bottom-0 h-24 bg-linear-to-t from-black/12 to-transparent [mask-image:linear-gradient(to_right,transparent,black_6%,black_94%,transparent)]" />
      </div>
      <Dock />
    </div>
  );
}
